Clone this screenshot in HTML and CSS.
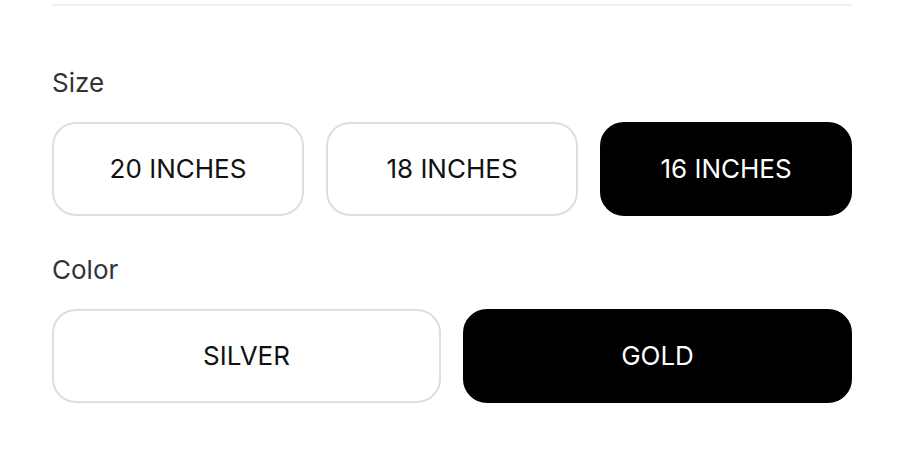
FILE: index.html
```html
<!DOCTYPE html>
<html>
<head>
<meta charset="utf-8">
<link rel="stylesheet" href="styles.css">
</head>
<body>
<div class="panel">
  <div class="divider"></div>
  <div class="option-group first">
    <div class="label">Size</div>
    <div class="choices three">
      <button class="choice">20 INCHES</button>
      <button class="choice">18 INCHES</button>
      <button class="choice selected">16 INCHES</button>
    </div>
  </div>
  <div class="option-group">
    <div class="label">Color</div>
    <div class="choices two">
      <button class="choice">SILVER</button>
      <button class="choice selected">GOLD</button>
    </div>
  </div>
</div>
</body>
</html>
```
FILE: styles.css
```css
html, body {
  margin: 0;
  padding: 0;
  background: #fff;
}
body {
  font-family: Inter, "Liberation Sans", sans-serif;
}
.panel {
  padding: 4px 64px 0 52px;
  width: 800px;
}
.divider {
  height: 2px;
  background: #efefef;
}
.option-group {
  margin-top: 38px;
}
.option-group.first {
  margin-top: 61px;
}
.label {
  font-size: 26px;
  line-height: 32px;
  color: #333;
  margin-bottom: 23px;
}
.choices {
  display: grid;
  gap: 22px;
}
.choices.three { grid-template-columns: repeat(3, 1fr); }
.choices.two { grid-template-columns: repeat(2, 1fr); }
.choice {
  height: 94px;
  box-sizing: border-box;
  border: 2px solid #dedede;
  border-radius: 24px;
  background: #fff;
  color: #111;
  font-family: Inter, "Liberation Sans", sans-serif;
  font-size: 26px;
  font-weight: 400;
  padding: 0 0 2px;
  display: flex;
  align-items: center;
  justify-content: center;
}
.choice.selected {
  background: #000;
  border-color: #000;
  color: #fff;
}
```
